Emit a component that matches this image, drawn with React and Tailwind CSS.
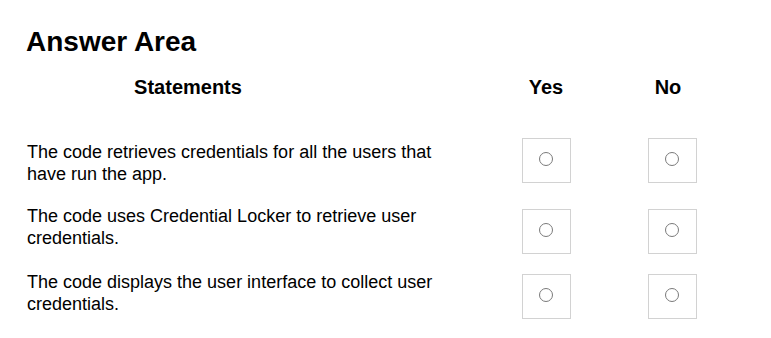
const rows = [
  {
    text: "The code retrieves credentials for all the users that have run the app.",
    rowClass: "mt-[39px]",
    textClass: "mt-[3px]",
    boxClass: "mt-0",
  },
  {
    text: "The code uses Credential Locker to retrieve user credentials.",
    rowClass: "mt-[20px]",
    textClass: "mt-0",
    boxClass: "mt-[4px]",
  },
  {
    text: "The code displays the user interface to collect user credentials.",
    rowClass: "mt-[17px]",
    textClass: "mt-0",
    boxClass: "mt-[3px]",
  },
];

function RadioBox({ className }) {
  return (
    <div className={"flex justify-center " + className}>
      <div className="w-[49px] h-[45px] border border-[#d2d2d2] flex items-center justify-center">
        <span className="w-[14px] h-[14px] rounded-full border border-[#7a7a7a] -mt-[3px]" />
      </div>
    </div>
  );
}

export default function App() {
  return (
    <div
      className="w-[771px] h-[338px] bg-white text-black pl-[26px] pt-[26px]"
      style={{ fontFamily: '"Liberation Sans", Arial, sans-serif' }}
    >
      <h1 className="text-[28px] leading-[32px] font-bold">Answer Area</h1>

      {/* column headers */}
      <div className="grid grid-cols-[444px_100px_100px] gap-x-[26px] mt-[17px] text-[20px] leading-[24px] font-bold">
        <div className="w-[324px] text-center">Statements</div>
        <div className="text-center">Yes</div>
        <div className="text-center pr-[8px]">No</div>
      </div>

      {rows.map((row, idx) => (
        <div
          key={idx}
          className={"grid grid-cols-[444px_100px_100px] gap-x-[26px] items-start " + row.rowClass}
        >
          <p className={"w-[420px] pl-[1px] text-[18px] leading-[22px] " + row.textClass}>
            {row.text}
          </p>
          <RadioBox className={row.boxClass} />
          <RadioBox className={row.boxClass} />
        </div>
      ))}
    </div>
  );
}
